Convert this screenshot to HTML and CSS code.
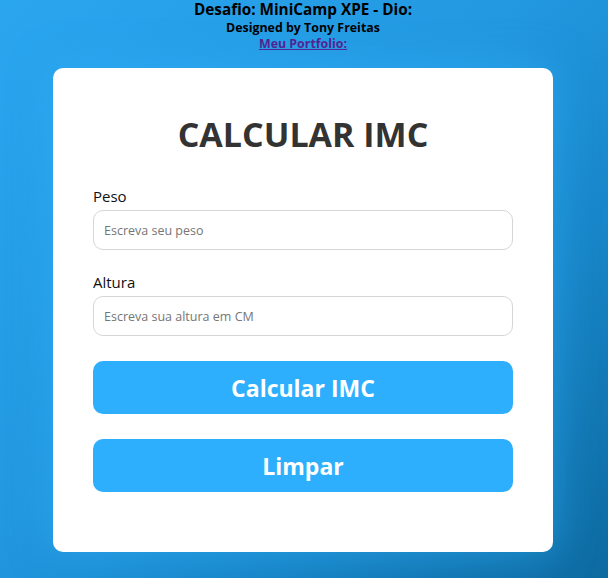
FILE: index.html
```html
<!DOCTYPE html>
<html lang="pt-BR">
<head>
<meta charset="utf-8">
<title>Calcular IMC</title>
<link rel="stylesheet" href="styles.css">
</head>
<body>
<header class="top">
  <h3 class="top-title">Desafio: MiniCamp XPE - Dio:</h3>
  <p class="top-sub">Designed by Tony Freitas</p>
  <a class="top-link" href="#">Meu Portfolio:</a>
</header>
<main class="card">
  <h1 class="card-title">CALCULAR IMC</h1>
  <div class="field">
    <label class="field-label" for="peso">Peso</label>
    <input class="field-input" id="peso" type="text" placeholder="Escreva seu peso">
  </div>
  <div class="field">
    <label class="field-label" for="altura">Altura</label>
    <input class="field-input" id="altura" type="text" placeholder="Escreva sua altura em CM">
  </div>
  <button class="btn" type="button">Calcular IMC</button>
  <button class="btn" type="button">Limpar</button>
</main>
</body>
</html>
```
FILE: styles.css
```css
* { box-sizing: border-box; }
html, body { height: 100%; }
body {
  margin: 0;
  padding-right: 2px;
  font-family: "Open Sans", "Noto Sans", sans-serif;
  background: linear-gradient(135deg, #2aa6ef 0%, #2298e0 45%, #1886c8 70%, #0d6aa0 100%);
  display: flex;
  flex-direction: column;
  align-items: center;
  overflow: hidden;
}
.top {
  display: flex;
  flex-direction: column;
  align-items: center;
}
.top-title {
  margin: 0;
  font-size: 15.3px;
  font-weight: 700;
  line-height: 19px;
  color: #000;
}
.top-sub {
  margin: 0;
  font-size: 12.4px;
  font-weight: 700;
  line-height: 17px;
  color: #000;
}
.top-link {
  font-size: 12.4px;
  font-weight: 700;
  line-height: 16px;
  color: #551a8b;
  text-decoration: underline;
}
.card {
  margin-top: 16px;
  width: 500px;
  background: #fff;
  border-radius: 10px;
  padding: 44px 40px 60px;
  display: flex;
  flex-direction: column;
  box-shadow: 0 0 40px rgba(50, 175, 250, 0.55);
}
.card-title {
  margin: 0 0 29px;
  text-align: center;
  font-size: 34px;
  font-weight: 700;
  line-height: 44px;
  color: #333;
}
.field {
  display: flex;
  flex-direction: column;
  margin-bottom: 21px;
}
.field-label {
  font-size: 15px;
  line-height: 22px;
  color: #111;
  margin-bottom: 3px;
}
.field-input {
  height: 40px;
  border: 1px solid #d6d6d6;
  border-radius: 10px;
  padding: 0 10px;
  font-family: inherit;
  font-size: 12.5px;
  color: #333;
  outline: none;
}
.field-input::placeholder { color: #767676; }
.btn {
  height: 53px;
  border: none;
  border-radius: 10px;
  background: #2eaffe;
  color: #fff;
  font-family: inherit;
  font-size: 23px;
  font-weight: 700;
  margin-top: 4px;
  margin-bottom: 21px;
  cursor: pointer;
}
.btn:last-child { margin-bottom: 0; }
```
